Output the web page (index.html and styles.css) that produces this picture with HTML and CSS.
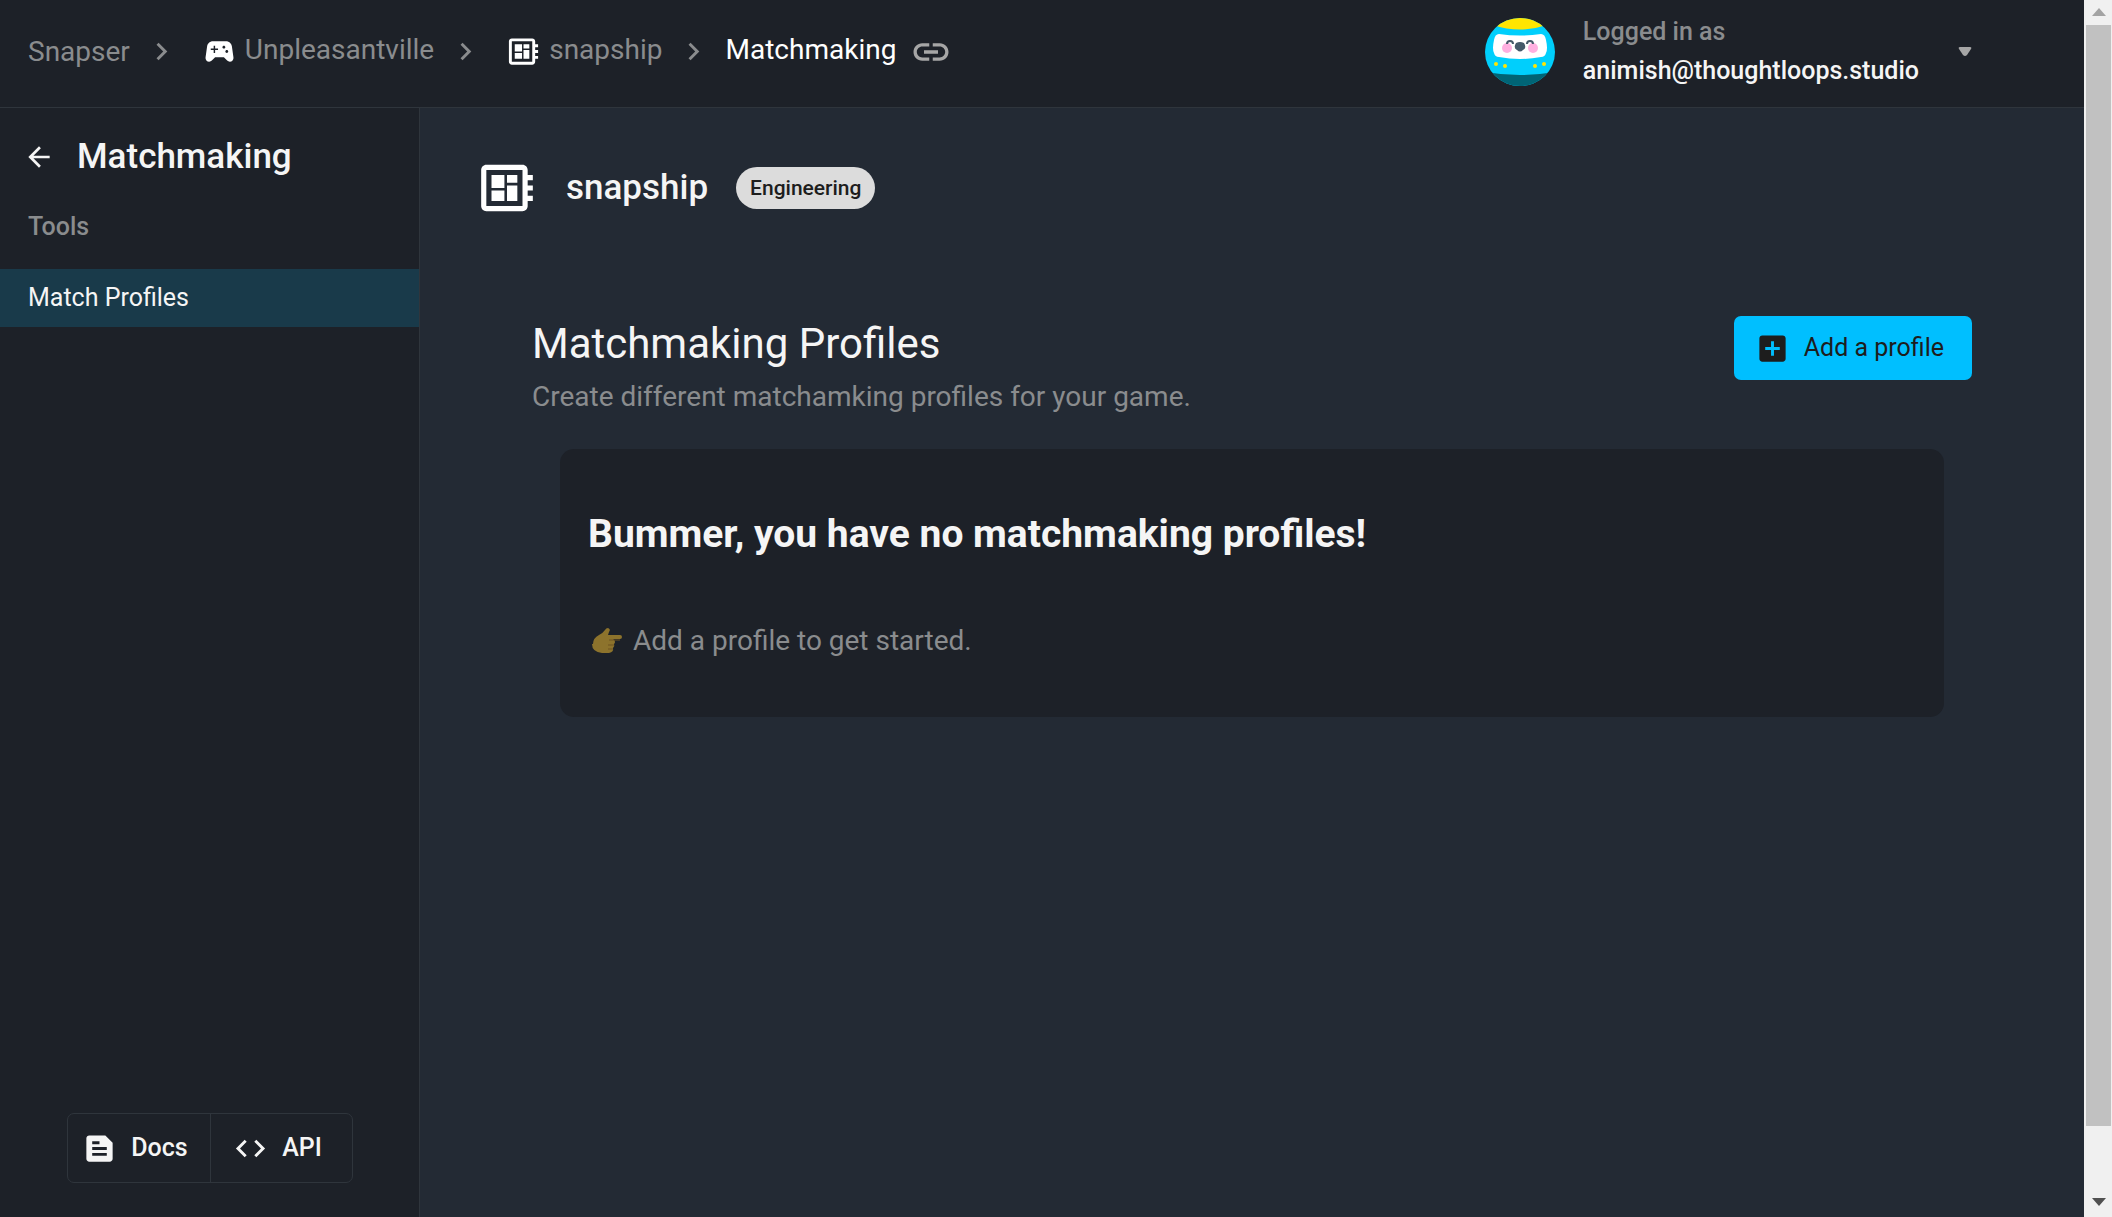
FILE: index.html
```html
<!DOCTYPE html>
<html lang="en">
<head>
<meta charset="utf-8">
<title>Matchmaking - snapship</title>
<link rel="stylesheet" href="styles.css">
</head>
<body>
<svg class="sprite" aria-hidden="true">
  <symbol id="chevron" viewBox="0 0 24 24"><path d="M10 6 8.59 7.41 13.17 12l-4.58 4.59L10 18l6-6z"/></symbol>
  <symbol id="board" viewBox="0 0 24 24"><path d="M22 9V7h-2V5c0-1.1-.9-2-2-2H4c-1.1 0-2 .9-2 2v14c0 1.1.9 2 2 2h14c1.1 0 2-.9 2-2v-2h2v-2h-2v-2h2v-2h-2V9h2zm-4 10H4V5h14v14zM6 13h5v4H6v-4zm6-6h4v3h-4V7zM6 7h5v5H6V7zm6 4h4v6h-4v-6z"/></symbol>
</svg>
<div class="app">
  <div class="page">
    <header class="topbar">
      <nav class="crumbs" aria-label="Breadcrumb">
        <a class="crumb" href="#">Snapser</a>
        <svg class="icon chevron"><use href="#chevron"/></svg>
        <a class="crumb crumb-item" href="#">
          <svg class="icon" viewBox="0 0 24 24"><path d="M21.58 16.09l-1.09-7.66C20.21 6.46 18.52 5 16.53 5H7.47C5.48 5 3.79 6.46 3.51 8.43l-1.09 7.66C2.2 17.63 3.39 19 4.94 19c.68 0 1.32-.27 1.8-.75L9 16h6l2.25 2.25c.48.48 1.13.75 1.8.75 1.56 0 2.75-1.37 2.53-2.91zM11 11H9v2H8v-2H6v-1h2V8h1v2h2v1zm4-1c-.55 0-1-.45-1-1s.45-1 1-1 1 .45 1 1-.45 1-1 1zm2 3c-.55 0-1-.45-1-1s.45-1 1-1 1 .45 1 1-.45 1-1 1z"/></svg>
          <span class="crumb-text">Unpleasantville</span>
        </a>
        <svg class="icon chevron"><use href="#chevron"/></svg>
        <a class="crumb crumb-item" href="#">
          <svg class="icon"><use href="#board"/></svg>
          <span class="crumb-text">snapship</span>
        </a>
        <svg class="icon chevron"><use href="#chevron"/></svg>
        <a class="crumb crumb-current" href="#" aria-current="page">
          <span class="crumb-text">Matchmaking</span>
          <svg class="icon icon-link" viewBox="0 0 24 24"><path d="M3.9 12c0-1.71 1.39-3.1 3.1-3.1h4V7H7c-2.76 0-5 2.24-5 5s2.24 5 5 5h4v-1.9H7c-1.71 0-3.1-1.39-3.1-3.1zM8 13h8v-2H8v2zm9-6h-4v1.9h4c1.71 0 3.1 1.39 3.1 3.1s-1.39 3.1-3.1 3.1h-4V17h4c2.76 0 5-2.24 5-5s-2.24-5-5-5z"/></svg>
        </a>
      </nav>
      <button class="account" type="button">
        <svg class="avatar" viewBox="0 0 70 68" aria-hidden="true">
          <clipPath id="disc"><ellipse cx="35" cy="34" rx="35" ry="34"/></clipPath>
          <g clip-path="url(#disc)">
            <rect width="70" height="70" fill="#00cffc"/>
            <path d="M8 0h54v7Q35 16 8 7z" fill="#ffe500"/>
            <path d="M0 54q35 6 70 0v16H0z" fill="#006475"/>
            <path d="M14 16q21 3 42 0 4 0 5 6 2 9 0 13-1 4-5 4-21 4-42 0-4 0-5-4-2-4 0-13 1-6 5-6z" fill="#fff"/>
            <circle cx="22" cy="30" r="5" fill="#ffb0e0"/>
            <circle cx="48" cy="30" r="5" fill="#ffb0e0"/>
            <path d="M22 26q0-3 3-3t3 3M42 26q0-3 3-3t3 3" fill="none" stroke="#455a6a" stroke-width="2"/>
            <path d="M31 25q4-2 8 0 3 5-1 7-3 3-6 0-4-2-1-7z" fill="#455a6a"/>
            <g fill="#ffe500"><circle cx="11" cy="46" r="2"/><circle cx="20" cy="48" r="2"/><circle cx="50" cy="48" r="2"/><circle cx="59" cy="46" r="2"/></g>
          </g>
        </svg>
        <span class="who">
          <span class="who-label">Logged in as</span>
          <span class="who-mail">animish@thoughtloops.studio</span>
        </span>
        <svg class="caret" viewBox="0 0 14 10" aria-hidden="true"><path d="M2 0h10q2 0 1 2L9 8q-2 2-4 0L1 2Q0 0 2 0z"/></svg>
      </button>
    </header>
    <div class="body">
      <aside class="sidebar">
        <div class="side-head">
          <a class="back" href="#" aria-label="Back"><svg class="icon icon-back" viewBox="0 0 24 24"><path d="M20 11H7.83l5.59-5.59L12 4l-8 8 8 8 1.41-1.41L7.83 13H20v-2z"/></svg></a>
          <h2 class="side-title">Matchmaking</h2>
        </div>
        <h3 class="side-group">Tools</h3>
        <a class="side-item" href="#">Match Profiles</a>
        <div class="side-links">
          <a class="side-link" href="#"><svg class="icon" viewBox="0 0 24 24"><path d="M16 3H5c-1.100 0-2 .9-2 2v14c0 1.100.9 2 2 2h14c1.100 0 2-.9 2-2V8l-5-5zM7 7h5v2H7V7zm10 10H7v-2h10v2zm0-4H7v-2h10v2z"/></svg>Docs</a>
          <a class="side-link" href="#"><svg class="icon" viewBox="0 0 24 24"><path d="M9.400 16.600 4.800 12l4.600-4.600L8 6l-6 6 6 6 1.400-1.400zm5.200 0 4.600-4.600-4.600-4.600L16 6l6 6-6 6-1.400-1.400z"/></svg>API</a>
        </div>
      </aside>
      <main class="main">
        <div class="project">
          <svg class="icon icon-project"><use href="#board"/></svg>
          <h1 class="project-name">snapship</h1>
          <span class="badge">Engineering</span>
        </div>
        <section class="profiles">
          <div class="profiles-head">
            <div>
              <h2 class="profiles-title">Matchmaking Profiles</h2>
              <p class="profiles-sub">Create different matchamking profiles for your game.</p>
            </div>
            <button class="add" type="button"><svg class="icon" viewBox="0 0 24 24"><path d="M19 3H5c-1.110 0-2 .9-2 2v14c0 1.100.89 2 2 2h14c1.100 0 2-.9 2-2V5c0-1.100-.9-2-2-2zm-2 10h-4v4h-2v-4H7v-2h4V7h2v4h4v2z"/></svg>Add a profile</button>
          </div>
          <div class="empty">
            <h3 class="empty-title">Bummer, you have no matchmaking profiles!</h3>
            <p class="empty-text">
              <svg class="hand" viewBox="0 0 30 26" aria-hidden="true"><path d="M1 16Q1 10 7 7q4-2 6-5 1-2 3-2 3 1 1 4l-1 3h12q2 0 2 2t-2 2h-7q2 1 2 3 0 1-1 2 1 2-1 4 1 4-4 5h-7q-10-1-10-9z" fill="#8d732c"/><path d="M17 12h11M16 17h6M16 21h5" fill="none" stroke="#6f5520" stroke-width="1"/></svg>
              Add a profile to get started.
            </p>
          </div>
        </section>
      </main>
    </div>
  </div>
  <div class="scrollbar" aria-hidden="true">
    <svg class="arrow arrow-up" viewBox="0 0 14 8"><path d="M7 0l7 8H0z"/></svg>
    <div class="thumb"></div>
    <svg class="arrow" viewBox="0 0 14 8"><path d="M0 0h14L7 8z"/></svg>
  </div>
</div>
</body>
</html>
```
FILE: styles.css
```css
* { box-sizing: border-box; }
body, h1, h2, h3, p { margin: 0; }
body {
  background: #232a34;
  color: #f5f5f5;
  font-family: Roboto, "Liberation Sans", sans-serif;
  font-size: 28px;
  line-height: 40px;
}
a { color: inherit; text-decoration: none; }
button { border: 0; padding: 0; background: none; color: inherit; font: inherit; cursor: pointer; }
.sprite { position: absolute; width: 0; height: 0; }
.icon { width: 35px; height: 35px; flex: none; fill: currentColor; }

.app { display: flex; min-height: 100vh; }
.page { flex: 1; display: flex; flex-direction: column; min-width: 0; }

.topbar {
  display: flex;
  align-items: center;
  justify-content: space-between;
  height: 108px;
  padding: 0 112px 4px 28px;
  background: #1d2128;
  border-bottom: 1px solid #2f353c;
}
.crumbs { display: flex; align-items: center; color: #8a8c8e; }
.crumb { display: flex; align-items: center; gap: 8px; }
.crumb-item { margin-left: 9px; }
.crumb .icon { fill: #fff; }
.crumb-text { padding-bottom: 4px; }
.chevron { margin: 0 14px; }
.crumb-current { color: #fff; gap: 14px; }
.crumb .icon-link { width: 42px; height: 42px; fill: #a6a6a6; }

.account { display: flex; align-items: center; text-align: left; }
.avatar { width: 70px; height: 68px; }
.who { display: flex; flex-direction: column; margin: 0 39px 2px 28px; font-size: 25px; line-height: 39px; font-weight: 500; }
.who-label { color: #8a8c8e; }
.caret { width: 14px; height: 10px; fill: #a6a6a6; }

.body { flex: 1; display: flex; }
.sidebar {
  width: 420px;
  flex: none;
  display: flex;
  flex-direction: column;
  background: #1d2128;
  border-right: 1px solid #2f353c;
}
.side-head { display: flex; align-items: center; gap: 22px; padding: 29px 23px 0; }
.back { display: flex; }
.icon-back { width: 32px; height: 32px; }
.side-title { font-size: 35px; font-weight: 500; }
.side-group { padding: 30px 28px 22px; font-size: 25px; font-weight: 500; color: #8a8c8e; }
.side-item { padding: 9px 28px; background: #193a4a; font-size: 25px; }
.side-links {
  display: flex;
  align-self: center;
  margin: auto 0 34px;
  border: 1px solid #2f353c;
  border-radius: 7px;
}
.side-link {
  display: flex;
  align-items: center;
  justify-content: center;
  gap: 14px;
  width: 142px;
  height: 68px;
  padding-right: 7px;
  font-size: 25px;
  font-weight: 500;
}
.side-link + .side-link { border-left: 1px solid #2f353c; }

.main { flex: 1; padding: 49px 56px; min-width: 0; }
.project { display: flex; align-items: center; gap: 28px; }
.icon-project { width: 62px; height: 62px; fill: #fff; }
.project-name { font-size: 35px; font-weight: 500; }
.badge { padding: 0 14px; line-height: 42px; border-radius: 21px; background: #dcdcdc; color: #1d1d1d; font-size: 21px; font-weight: 500; }

.profiles { margin: 95px 56px 0; }
.profiles-head { display: flex; justify-content: space-between; align-items: flex-start; }
.profiles-title { font-size: 42px; line-height: 60px; font-weight: 400; }
.profiles-sub { color: #8a8c8e; padding-top: 3px; }
.add {
  display: flex;
  align-items: center;
  gap: 14px;
  margin-top: 2px;
  height: 64px;
  padding: 0 28px 0 21px;
  border-radius: 7px;
  background: #00bfff;
  color: #1d1d1d;
  font-size: 25px;
}
.empty { margin: 32px 28px 0; padding: 57px 28px 56px; border-radius: 14px; background: #1d2128; }
.empty-title { font-size: 39px; line-height: 56px; font-weight: 700; }
.empty-text { display: flex; align-items: center; gap: 11px; padding: 59px 4px 0; color: #8a8c8e; }
.hand { width: 30px; height: 26px; }

.scrollbar {
  width: 28px;
  flex: none;
  display: flex;
  flex-direction: column;
  align-items: center;
  padding: 8px 1px 11px 2px;
  background: #f0f0f0;
}
.thumb { flex: 1; width: 100%; margin: 9px 0 72px; background: #c1c1c1; }
.arrow { width: 14px; height: 8px; flex: none; fill: #505050; }
.arrow-up { fill: #a3a3a3; }
```
